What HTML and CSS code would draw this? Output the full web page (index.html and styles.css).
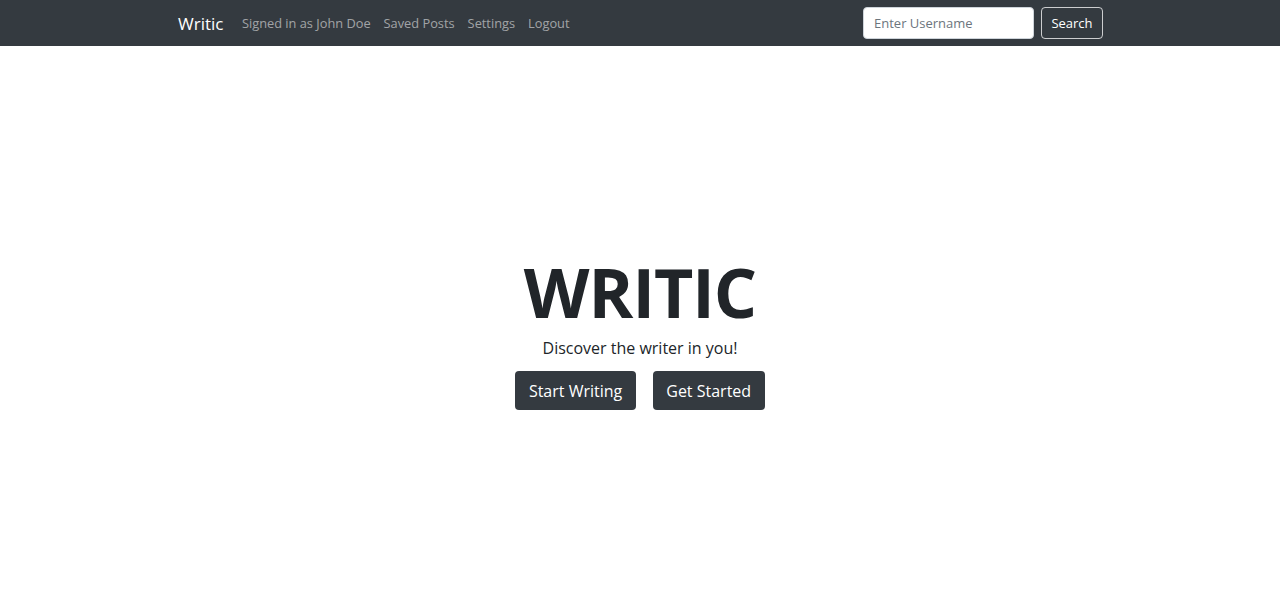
FILE: index.html
```html
<!DOCTYPE html>
<html lang="en">
<head>
<meta charset="utf-8">
<title>Writic</title>
<link rel="stylesheet" href="styles.css">
</head>
<body>
<nav class="navbar">
  <div class="nav-container">
    <div class="nav-left">
      <a class="brand" href="#">Writic</a>
      <a class="nav-link" href="#">Signed in as John Doe</a>
      <a class="nav-link" href="#">Saved Posts</a>
      <a class="nav-link" href="#">Settings</a>
      <a class="nav-link" href="#">Logout</a>
    </div>
    <form class="search">
      <input class="search-input" type="text" placeholder="Enter Username">
      <button class="search-btn" type="button">Search</button>
    </form>
  </div>
</nav>
<main class="hero">
  <h1 class="title">WRITIC</h1>
  <p class="tagline">Discover the writer in you!</p>
  <div class="actions">
    <a class="btn" href="#">Start Writing</a>
    <a class="btn" href="#">Get Started</a>
  </div>
</main>
</body>
</html>
```
FILE: styles.css
```css
* { box-sizing: border-box; }
html, body { margin: 0; padding: 0; }
body {
  font-family: "Open Sans", "Noto Sans", sans-serif;
  color: #212529;
  background: #fff;
  height: 100vh;
  display: flex;
  flex-direction: column;
}
a { text-decoration: none; }
.navbar {
  background: #343a40;
  height: 46px;
  flex: 0 0 auto;
}
.nav-container {
  width: 926px;
  margin: 0 auto;
  height: 100%;
  display: flex;
  align-items: center;
  justify-content: space-between;
}
.nav-left {
  display: flex;
  align-items: center;
}
.brand {
  color: #fff;
  font-size: 17px;
  margin-right: 12px;
  margin-left: 1px;
}
.nav-link {
  color: rgba(255,255,255,0.55);
  font-size: 12.8px;
  padding: 0 6.5px;
}
.search {
  display: flex;
  align-items: center;
  gap: 7px;
}
.search-input {
  width: 171px;
  height: 32px;
  border: 1px solid #ced4da;
  border-radius: 4px;
  padding: 0 10px;
  font-family: inherit;
  font-size: 13px;
  color: #495057;
  background: #fff;
}
.search-input::placeholder { color: #6c757d; }
.search-btn {
  height: 32px;
  width: 62px;
  background: transparent;
  border: 1px solid rgba(255,255,255,0.75);
  border-radius: 4px;
  color: #fff;
  font-family: inherit;
  font-size: 13px;
  padding: 0;
}
.hero {
  flex: 1 1 auto;
  display: flex;
  flex-direction: column;
  align-items: center;
  justify-content: center;
  padding-top: 6px;
}
.title {
  margin: 0;
  font-size: 68px;
  font-weight: 700;
  line-height: 1.36;
  letter-spacing: -1px;
}
.tagline {
  margin: 0 0 11px;
  font-size: 16px;
  line-height: 1.36;
}
.actions {
  display: flex;
  gap: 17px;
}
.btn {
  background: #343a40;
  color: #fff;
  border-radius: 4px;
  height: 39px;
  display: flex;
  align-items: center;
  padding: 0 13.5px;
  font-size: 16px;
}
```
